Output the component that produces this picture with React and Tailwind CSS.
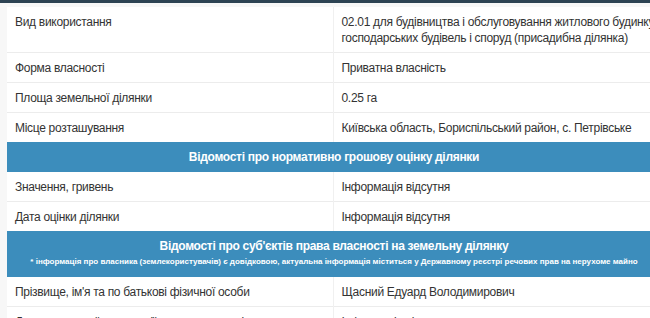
import React from "react";

const rows1 = [
  {
    label: "Вид використання",
    value:
      "02.01 для будівництва і обслуговування житлового будинку, господарських будівель і споруд (присадибна ділянка)",
  },
  { label: "Форма власності", value: "Приватна власність" },
  { label: "Площа земельної ділянки", value: "0.25 га" },
  { label: "Місце розташування", value: "Київська область, Бориспільський район, с. Петрівське" },
];

const rows2 = [
  { label: "Значення, гривень", value: "Інформація відсутня" },
  { label: "Дата оцінки ділянки", value: "Інформація відсутня" },
];

const rows3 = [
  { label: "Прізвище, ім'я та по батькові фізичної особи", value: "Щасний Едуард Володимирович" },
  { label: "Дата державної реєстрації права власності", value: "Інформація відсутня" },
];

const Row = ({ label, value, first }) => (
  <tr className={first ? "" : "border-t border-[#ececec]"}>
    <td className="w-[326px] pl-[8px] pr-2 pt-[7px] pb-[6px] align-top border-r border-[#f0f0f0]">
      {label}
    </td>
    <td className="pl-2 pr-0 pt-[7px] pb-[6px] align-top">{value}</td>
  </tr>
);

const Head = ({ title, note }) => (
  <tr className="bg-[#3c8dbc] text-white">
    <td colSpan={2} className={`text-center font-bold ${note ? "pt-[7px] pb-[9px]" : "pt-[7px] pb-[7px]"}`}>
      <div className="leading-[16px]">{title}</div>
      {note && <div className="text-[8px] leading-[12px] mt-[2px] tracking-[0px]">{note}</div>}
    </td>
  </tr>
);

export default function App() {
  return (
    <div
      className="w-[650px] h-[318px] overflow-hidden bg-[#f7f7f7] text-[#333] text-[12px] leading-[16px] tracking-[-0.3px]"
      style={{ fontFamily: '"Liberation Sans", Arial, sans-serif' }}
    >
      <div className="h-[3px] bg-[#2d4353]" />
      <div className="pl-[7px] pt-[4px]">
        <table className="w-[654px] bg-white border-collapse">
          <tbody>
            {rows1.map((r, i) => (
              <Row key={r.label} {...r} first={i === 0} />
            ))}
            <Head title="Відомості про нормативно грошову оцінку ділянки" />
            {rows2.map((r, i) => (
              <Row key={r.label} {...r} first={i === 0} />
            ))}
            <Head
              title="Відомості про суб'єктів права власності на земельну ділянку"
              note="* інформація про власника (землекористувачів) є довідковою, актуальна інформація міститься у Державному реєстрі речових прав на нерухоме майно"
            />
            {rows3.map((r, i) => (
              <Row key={r.label} {...r} first={i === 0} />
            ))}
          </tbody>
        </table>
      </div>
    </div>
  );
}
